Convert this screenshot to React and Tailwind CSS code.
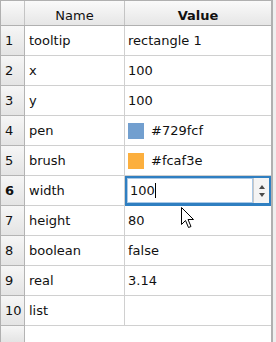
import React from "react";

const rows = [
  { name: "tooltip", value: "rectangle 1" },
  { name: "x", value: "100" },
  { name: "y", value: "100" },
  { name: "pen", value: "#729fcf", swatch: "#729fcf" },
  { name: "brush", value: "#fcaf3e", swatch: "#fcaf3e" },
  { name: "width", value: "100", editing: true },
  { name: "height", value: "80" },
  { name: "boolean", value: "false" },
  { name: "real", value: "3.14" },
  { name: "list", value: "" },
];

const SpinArrows = () => (
  <svg width="10" height="20" viewBox="0 0 10 20">
    <path d="M2 8 L5 4 L8 8 Z" fill="#4a4a4a" />
    <path d="M2 12 L5 16 L8 12 Z" fill="#4a4a4a" />
  </svg>
);

const Pointer = () => (
  <svg width="16" height="24" viewBox="0 0 16 24">
    <path
      d="M1.5 1.5 L1.5 18.5 L5.5 14.5 L8.5 21.5 L11 20.5 L8 13.5 L13.5 13.5 Z"
      fill="#ffffff"
      stroke="#000000"
      strokeWidth="1"
      strokeLinejoin="miter"
    />
  </svg>
);

const RowHeader = ({ n, bold }) => (
  <div
    className={`w-[24px] shrink-0 flex items-center pl-[4px] border-r border-b border-[#b4b4b4] bg-gradient-to-b from-[#f6f6f6] to-[#e4e4e4] ${
      bold ? "font-bold" : ""
    }`}
  >
    {n}
  </div>
);

export default function App() {
  return (
    <div
      className="relative w-[276px] h-[342px] overflow-hidden bg-[#efefef] text-[13px] text-[#111]"
      style={{ fontFamily: '"DejaVu Sans", sans-serif' }}
    >
      <div className="w-[273px] h-[342px] bg-white border-l border-t border-r-2 border-[#b0b0b0] flex flex-col">
        {/* header */}
        <div className="flex h-[25px] shrink-0 border-b border-[#b0b0b0] bg-gradient-to-b from-[#fafafa] to-[#e6e6e6]">
          <div className="w-[24px] shrink-0 border-r border-[#c4c4c4]" />
          <div className="w-[100px] shrink-0 flex items-center justify-center pt-[5px] border-r border-[#c4c4c4]">
            Name
          </div>
          <div className="flex-1 flex items-center justify-center pt-[5px] font-bold">
            Value
          </div>
        </div>

        {rows.map((r, i) => (
          <div key={r.name} className="flex h-[30px] shrink-0">
            <RowHeader n={i + 1} bold={r.editing} />
            <div className="w-[100px] shrink-0 flex items-center pl-[4px] pt-[1px] border-r border-b border-[#d0d0d0]">
              {r.name}
            </div>
            {r.editing ? (
              <div className="flex-1 flex border-2 border-b-[3px] border-[#2f7fc1] bg-white">
                <div className="flex-1 flex items-center pl-[2px] border border-[#a9c8e6]">
                  <span>{r.value}</span>
                  <span className="w-px h-[15px] bg-black" />
                </div>
                <div className="w-[16px] flex items-center justify-center border-l border-[#c8c8c8] bg-[#f4f4f4]">
                  <SpinArrows />
                </div>
              </div>
            ) : (
              <div className="flex-1 flex items-center pl-[3px] pt-[1px] gap-[7px] border-b border-[#d0d0d0]">
                {r.swatch && (
                  <span
                    className="w-[16px] h-[16px] shrink-0"
                    style={{ backgroundColor: r.swatch }}
                  />
                )}
                <span>{r.value}</span>
              </div>
            )}
          </div>
        ))}

        <div className="flex flex-1">
          <div className="w-[24px] shrink-0 border-r border-[#b4b4b4] bg-gradient-to-b from-[#f6f6f6] to-[#e4e4e4]" />
          <div className="flex-1 bg-white" />
        </div>
      </div>

      <div className="absolute left-[180px] top-[206px]">
        <Pointer />
      </div>
    </div>
  );
}
